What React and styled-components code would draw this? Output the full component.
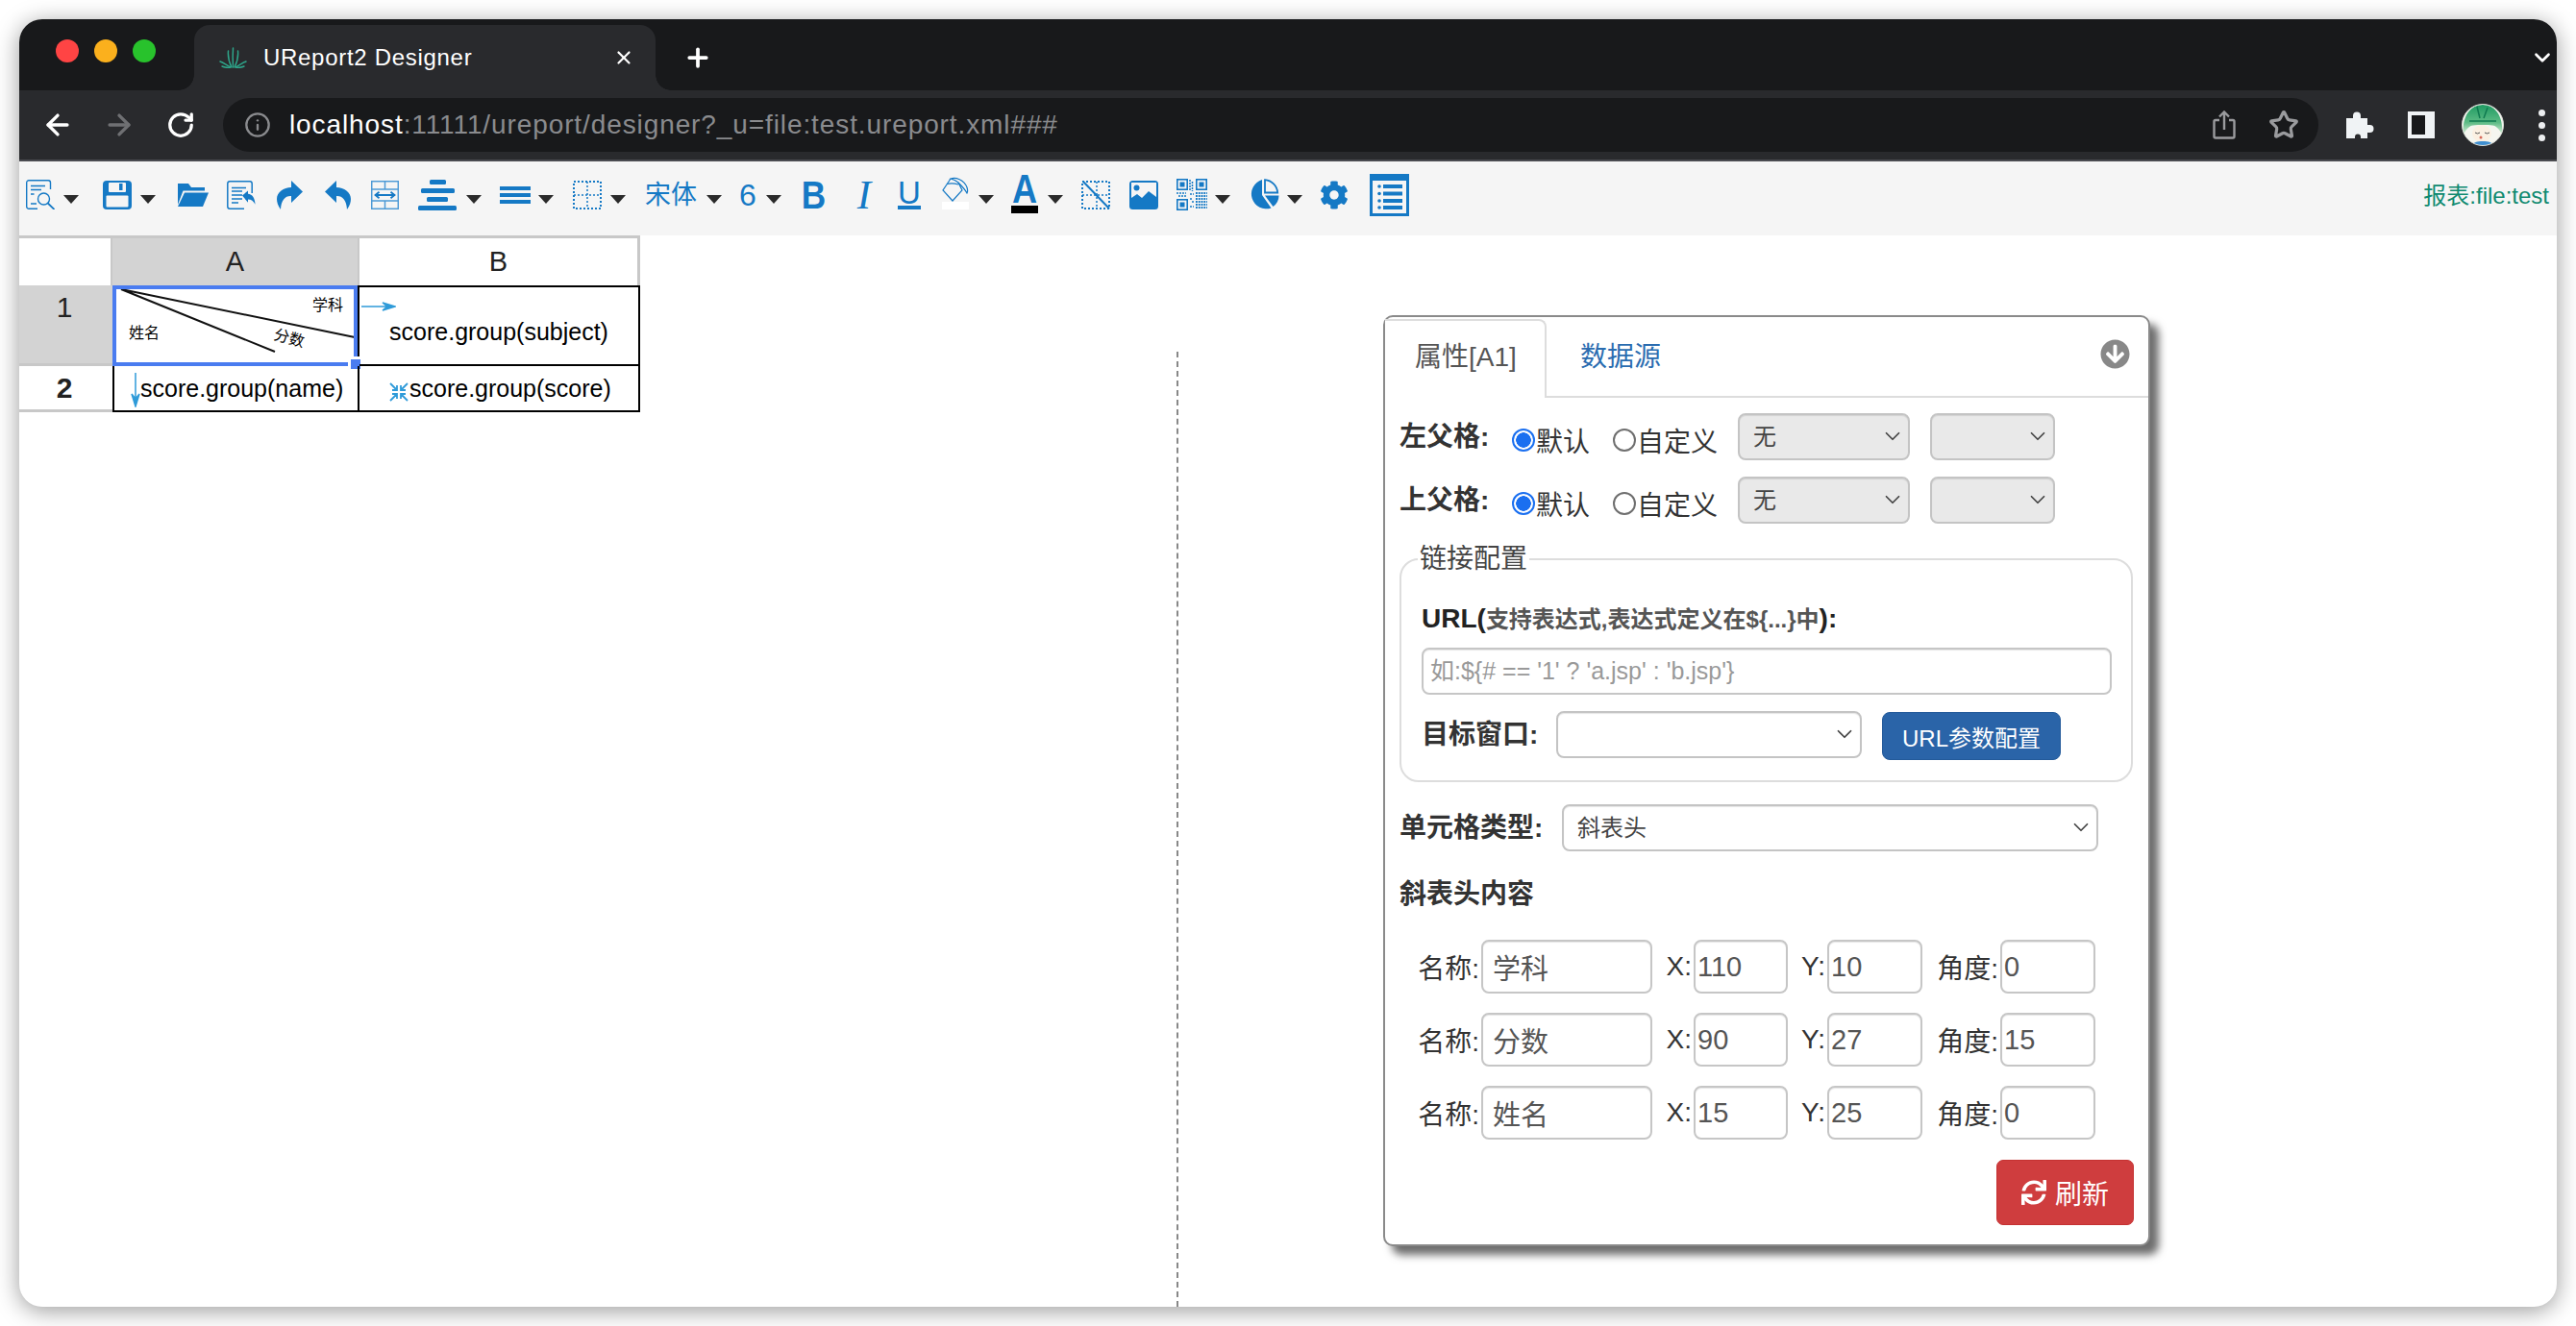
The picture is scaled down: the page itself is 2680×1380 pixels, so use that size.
import React from "react";
import styled, { createGlobalStyle } from "styled-components";
import { FaArrowCircleDown, FaCog, FaSync } from "react-icons/fa";
import { ArrowLeft, ArrowRight, ChevronDown, Info, Plus, RotateCw, Star, X } from "lucide-react";

const BLUE = "#1579c5";
const FONT = `"Liberation Sans", "Noto Sans CJK SC", sans-serif`;

const GlobalStyle = createGlobalStyle`
html, body {
  margin: 0;
  padding: 0;
  background: #fff;
  font-family: ${FONT};
  overflow: hidden;
}
`;

const Page = styled.div`
box-sizing: border-box;
width: 2680px;
height: 1380px;
padding: 20px;
`;

const Window = styled.div`
width: 2640px;
height: 1340px;
border-radius: 24px;
background: #fff;
box-shadow: 0 4px 24px rgba(0, 0, 0, 0.4);
display: flex;
flex-direction: column;
overflow: hidden;
`;

const TabStrip = styled.div`
height: 74px;
flex: none;
background: #18191b;
display: flex;
align-items: flex-end;
`;

const Lights = styled.div`
align-self: flex-start;
display: flex;
gap: 16px;
margin: 21px 0 0 38px;
`;

const Light = styled.span`
width: 24px;
height: 24px;
border-radius: 50%;
background: ${props => props.$color};
`;

const BrowserTab = styled.div`
position: relative;
box-sizing: border-box;
width: 480px;
height: 68px;
margin-left: 40px;
padding: 0 22px 0 26px;
background: #292a2d;
border-radius: 16px 16px 0 0;
display: flex;
align-items: center;
color: #fff;
font-size: 24px;
&::before, &::after {
  content: "";
  position: absolute;
  bottom: 0;
  width: 16px;
  height: 16px;
}
&::before {
  left: -16px;
  background: radial-gradient(circle at 0 0, transparent 15.5px, #292a2d 16px);
}
&::after {
  right: -16px;
  background: radial-gradient(circle at 100% 0, transparent 15.5px, #292a2d 16px);
}
`;

const TabTitle = styled.span`
margin-left: 17px;
flex: 1;
letter-spacing: 0.7px;
`;

const NewTab = styled.span`
height: 68px;
margin-left: 29px;
display: flex;
align-items: center;
color: #fff;
`;

const StripChevron = styled.span`
margin-left: auto;
margin-right: 2px;
height: 68px;
display: flex;
align-items: center;
color: #fff;
`;

const AddressRow = styled.div`
box-sizing: border-box;
height: 74px;
flex: none;
background: #292a2d;
border-bottom: 2px solid #4a4b50;
padding-left: 8px;
display: flex;
align-items: center;
`;

const NavButton = styled.span`
width: 64px;
display: flex;
justify-content: center;
color: ${props => props.$dim ? "#6f7073" : "#fff"};
`;

const UrlBox = styled.div`
box-sizing: border-box;
width: 2180px;
height: 56px;
margin-left: 12px;
padding: 0 20px 0 22px;
border-radius: 28px;
background: #18191b;
display: flex;
align-items: center;
color: #8a8b8e;
font-size: 28px;
`;

const UrlText = styled.span`
margin-left: 19px;
flex: 1;
white-space: nowrap;
letter-spacing: 0.9px;
b {
  font-weight: normal;
  color: #fff;
}
`;

const UrlAction = styled.span`
display: flex;
margin-left: ${props => props.$ml || 0}px;
color: #9a9b9e;
`;

const ExtArea = styled.div`
margin-left: 21px;
display: flex;
align-items: center;
gap: 20px;
`;

const ExtButton = styled.span`
width: 44px;
display: flex;
justify-content: center;
color: #f0f3f5;
`;

const Dots = styled.span`
margin-left: 16px;
display: flex;
flex-direction: column;
gap: 6px;
i {
  display: block;
  width: 7px;
  height: 7px;
  border-radius: 50%;
  background: #eceef0;
}
`;

const Toolbar = styled.div`
box-sizing: border-box;
height: 77px;
flex: none;
background: #f5f5f5;
padding: 0 8px 8px 7px;
display: flex;
align-items: center;
color: ${BLUE};
`;

const Tool = styled.span`
display: flex;
flex: none;
margin-left: ${props => props.$ml || 0}px;
`;

const ToolText = styled.span`
flex: none;
margin-left: ${props => props.$ml}px;
font-size: ${props => props.$size}px;
line-height: 34px;
`;

const Caret = styled.span`
flex: none;
width: 0;
height: 0;
margin-top: 9px;
margin-left: ${props => props.$ml}px;
border-left: 8px solid transparent;
border-right: 8px solid transparent;
border-top: 9px solid #2a2a2a;
`;

const BoldGlyph = styled.span`
flex: none;
margin-left: ${props => props.$ml}px;
font-size: 40px;
font-weight: bold;
line-height: 34px;
transform: scaleX(0.88);
`;

const ItalicGlyph = styled.span`
flex: none;
margin-left: ${props => props.$ml}px;
font-family: "Liberation Serif", serif;
font-style: italic;
font-size: 43px;
line-height: 34px;
`;

const UnderGlyph = styled.span`
flex: none;
width: 24px;
margin-left: ${props => props.$ml}px;
font-size: 33px;
line-height: 27px;
text-align: center;
border-bottom: 4px solid ${BLUE};
`;

const SwatchTool = styled.span`
flex: none;
width: 28px;
margin-left: ${props => props.$ml}px;
margin-top: -3px;
display: flex;
flex-direction: column;
align-items: center;
`;

const Swatch = styled.span`
width: 28px;
height: 8px;
background: ${props => props.$color};
`;

const ColorLetter = styled.span`
font-size: 42px;
font-weight: bold;
line-height: 34px;
height: 34px;
transform: scaleX(0.86);
`;

const ReportName = styled.span`
margin-left: auto;
margin-bottom: 3px;
color: #0f8a70;
font-size: 24px;
`;

const Workspace = styled.div`
flex: 1;
display: flex;
min-height: 0;
`;

const SheetPane = styled.div`
width: 1204px;
flex: none;
`;

const Sheet = styled.div`
display: grid;
grid-template-columns: 97px 257px 292px;
grid-template-rows: 52px 84px 48px;
width: 646px;
color: #000;
font-size: 25px;
`;

const HeadCell = styled.div`
box-sizing: border-box;
border-top: 3px solid #c8c8c8;
border-right: ${props => props.$last ? "3px" : "2px"} solid #c8c8c8;
background: ${props => props.$active ? "#d3d3d3" : "#fff"};
display: flex;
align-items: center;
justify-content: center;
font-size: 29px;
color: #222;
`;

const RowHead = styled.div`
box-sizing: border-box;
padding: ${props => props.$pad}px 3px 0 0;
border-bottom: 3px solid #c8c8c8;
background: ${props => props.$active ? "#d3d3d3" : "#fff"};
text-align: center;
font-size: 30px;
line-height: 40px;
font-weight: ${props => props.$bold ? "bold" : "normal"};
color: #222;
`;

const DataCell = styled.div`
position: relative;
box-sizing: border-box;
border-right: 2px solid #000;
border-bottom: 2px solid #000;
border-top: ${props => props.$first ? "2px solid #000" : "0"};
border-left: ${props => props.$lead ? "2px solid #000" : "0"};
display: flex;
align-items: center;
justify-content: ${props => props.$center ? "center" : "flex-start"};
padding-left: ${props => props.$pad || 0}px;
padding-top: ${props => props.$top || 0}px;
white-space: nowrap;
`;

const CellIcon = styled.svg`
position: absolute;
left: ${props => props.$x}px;
top: ${props => props.$y}px;
`;

const Selection = styled.span`
position: absolute;
inset: -2px 0 -2px -2px;
border: 4px solid #4a7cf0;
pointer-events: none;
`;

const SelectionHandle = styled.span`
position: absolute;
right: -10px;
bottom: -10px;
width: 10px;
height: 10px;
background: #4a7cf0;
border: 3px solid #fff;
`;

const DiagonalCanvas = styled.svg`
display: block;
`;

const Splitter = styled.div`
width: 0;
flex: none;
margin-top: 121px;
border-left: 2px dashed #888;
`;

const PanelPane = styled.div`
flex: 1;
padding: 83px 0 0 213px;
`;

const Panel = styled.div`
box-sizing: border-box;
width: 798px;
height: 969px;
border: 2px solid #8a8a8a;
border-radius: 10px;
background: #fff;
box-shadow: 9px 9px 9px #6e6e6e;
color: #333;
font-size: 28px;
`;

const PanelTabs = styled.div`
position: relative;
box-sizing: border-box;
height: 84px;
border-bottom: 2px solid #ddd;
display: flex;
align-items: flex-end;
`;

const PanelTab = styled.div`
box-sizing: border-box;
height: ${props => props.$active ? "82px" : "80px"};
width: ${props => props.$active ? "168px" : "auto"};
margin-bottom: ${props => props.$active ? "-2px" : "0"};
padding-left: ${props => props.$active ? "31px" : "35px"};
background: #fff;
border: ${props => props.$active ? "2px solid #ddd" : "0"};
border-bottom: 0;
border-left: 0;
border-radius: 0 8px 0 0;
line-height: ${props => props.$active ? "76px" : "79px"};
color: ${props => props.$active ? "#555" : "#2a6cb0"};
`;

const CollapseIcon = styled.span`
position: absolute;
right: 19px;
top: 23px;
display: flex;
color: #888;
`;

const PanelBody = styled.div`
padding: 16px 0 0 15px;
`;

const FormRow = styled.div`
height: 49px;
margin-top: ${props => props.$mt || 0}px;
display: flex;
align-items: center;
`;

const Strong = styled.span`
flex: none;
width: ${props => props.$w ? `${props.$w}px` : "auto"};
font-weight: bold;
line-height: 40px;
`;

const Radio = styled.input.attrs({ type: "radio" })`
appearance: none;
flex: none;
box-sizing: border-box;
width: 24px;
height: 24px;
margin: 6px 1px 0 ${props => props.$ml}px;
border-radius: 50%;
border: 2px solid ${props => props.defaultChecked ? "#1a6ff0" : "#6f6f6f"};
background: ${props => props.defaultChecked ? "radial-gradient(circle, #1a6ff0 0 7.5px, #fff 8px)" : "#fff"};
`;

const RadioText = styled.span`
flex: none;
margin-top: 12px;
line-height: 40px;
`;

const SelectWrap = styled.span`
position: relative;
flex: none;
display: block;
width: ${props => props.$w}px;
height: 49px;
margin-left: ${props => props.$ml || 0}px;
color: #444;
`;

const SelectField = styled.select`
appearance: none;
box-sizing: border-box;
width: 100%;
height: 100%;
padding: 0 30px 0 14px;
border: 2px solid #c4c4c4;
border-radius: 8px;
box-shadow: inset 0 1px 1px rgba(0, 0, 0, 0.1);
background: ${props => props.disabled ? "#e9e9e9" : "#fff"};
color: #444;
opacity: 1;
font-family: ${FONT};
font-size: 24px;
`;

const SelectArrow = styled.span`
position: absolute;
right: 5px;
top: 11px;
display: flex;
pointer-events: none;
`;

const LinkBox = styled.fieldset`
width: 763px;
box-sizing: border-box;
margin: 17px 0 0;
padding: 0 0 23px 21px;
border: 2px solid #ddd;
border-radius: 20px;
`;

const LinkLegend = styled.legend`
margin-left: -4px;
padding: 0 2px;
line-height: 40px;
color: #444;
`;

const UrlLabel = styled.div`
margin-top: 22px;
font-weight: bold;
line-height: 40px;
color: #222;
small {
  font-size: 24px;
  color: #555;
}
`;

const TextField = styled.input`
box-sizing: border-box;
display: block;
width: ${props => props.$w ? `${props.$w}px` : "100%"};
height: ${props => props.$h || 56}px;
margin: ${props => props.$mt || 0}px 0 0;
padding: 0 0 0 ${props => props.$pad}px;
border: 2px solid #c6c6c6;
border-radius: 8px;
box-shadow: inset 0 1px 1px rgba(0, 0, 0, 0.1);
background: #fff;
color: #555;
font-family: ${FONT};
font-size: ${props => props.$size || 29}px;
&::placeholder {
  color: #999;
}
`;

const PrimaryButton = styled.button`
flex: none;
width: 186px;
height: 50px;
margin: 3px 0 0 21px;
padding: 0;
border: 1px solid #245a9a;
border-radius: 8px;
background: #2a64a8;
color: #fff;
font-family: ${FONT};
font-size: 24px;
`;

const SectionTitle = styled.div`
margin-top: 25px;
font-weight: bold;
line-height: 40px;
color: #333;
`;

const OffsetGrid = styled.div`
margin: 27px 0 0 15px;
display: grid;
grid-template-columns: 70px 178px 43px 98px 41px 99px 81px 99px;
grid-auto-rows: 56px;
row-gap: 20px;
align-items: center;
`;

const OffsetLabel = styled.span`
text-align: right;
padding-right: ${props => props.$pr || 2}px;
color: #333;
`;

const RefreshButton = styled.button`
display: flex;
align-items: center;
justify-content: center;
gap: 9px;
width: 143px;
height: 68px;
margin: 21px 0 0 621px;
padding: 0;
border: 1px solid #c53232;
border-radius: 7px;
background: #cf3d3e;
color: #fff;
font-family: ${FONT};
font-size: 28px;
`;

const Favicon = () => (
  <svg width="29" height="22" viewBox="0 0 29 22" fill="none" stroke="#2ea58a" strokeWidth="1.5" strokeLinecap="round">
    <path d="M14.5 21C14 13 14 7 14.5 1" />
    <path d="M13 21C10 15 9 9 9.5 4" />
    <path d="M16 21C19 15 20 9 19.5 4" />
    <path d="M12 21C8 19 4 16 1 15" />
    <path d="M17 21C21 19 25 16 28 15" />
    <path d="M11 21.5C8 21.5 5 21 3 20" />
    <path d="M18 21.5C21 21.5 24 21 26 20" />
  </svg>
);

const ShareIcon = () => (
  <svg width="24" height="30" viewBox="0 0 24 30" fill="none" stroke="currentColor" strokeWidth="2.4">
    <path d="M7 10H3a1.5 1.5 0 0 0-1.5 1.5V27A1.5 1.5 0 0 0 3 28.5h18a1.5 1.5 0 0 0 1.5-1.5V11.500A1.5 1.5 0 0 0 21 10h-4" />
    <path d="M12 20V2M7 6.500L12 1.500L17 6.500" />
  </svg>
);

const PuzzleIcon = () => (
  <svg width="30" height="28" viewBox="0 0 30 28" fill="currentColor">
    <path d="M1 7h7V4.500a4 4 0 0 1 8 0V7h7v7h2.500a4 4 0 0 1 0 8H23v6h-7v-1.500a3 3 0 0 0-6 0V28H1z" />
  </svg>
);

const SidePanelIcon = () => (
  <svg width="28" height="28" viewBox="0 0 28 28">
    <rect width="28" height="28" fill="#f0f3f5" />
    <rect x="4" y="4" width="14" height="20" fill="#18191b" />
  </svg>
);

const Avatar = () => (
  <svg width="44" height="44" viewBox="0 0 44 44">
    <defs>
      <clipPath id="avatarClip"><circle cx="22" cy="22" r="21.500" /></clipPath>
      <linearGradient id="hairFill" x1="0" y1="0" x2="0" y2="1">
        <stop offset="0" stopColor="#1f9a62" />
        <stop offset="0.6" stopColor="#5dbb85" />
        <stop offset="1" stopColor="#dff2dd" />
      </linearGradient>
    </defs>
    <g clipPath="url(#avatarClip)">
      <rect width="44" height="44" fill="#f5f6f0" />
      <path d="M2 32C0 12 10 1 22 1s22 11 20 31c-3-6-6-9-10-9.500-5-.6-14-.6-20 0-4 .5-7 3.500-10 9.500z" fill="url(#hairFill)" />
      <ellipse cx="21" cy="31" rx="10" ry="9" fill="#fbf0e2" />
      <path d="M14 30q2.500 2 5 0M24 30q2.500 2 5 0" stroke="#555" strokeWidth="1" fill="none" />
      <circle cx="20" cy="35" r="1.500" fill="#d76a5a" />
      <path d="M10 44c2-4 6-5 12-5s10 1 12 5z" fill="#3f8fd0" />
      <path d="M16 3l3 12M27 4l-4 11M8 18h28" stroke="#0f7a50" strokeWidth="1.500" fill="none" />
    </g>
    <circle cx="22" cy="22" r="21.500" fill="none" stroke="#d9dcd6" />
  </svg>
);

const PreviewIcon = () => (
  <svg width="30" height="31" viewBox="0 0 30 31" fill="none" stroke={BLUE} strokeWidth="1.400">
    <path d="M25.500 10V3a2.300 2.300 0 0 0-2.300-2.300H3A2.300 2.300 0 0 0 .7 3v25A2.300 2.300 0 0 0 3 30.300h9" />
    <path d="M5 6.500h15M5 10.500h11M5 15h3.500M5 25h6" strokeWidth="1.600" />
    <circle cx="18.500" cy="20" r="6" />
    <path d="M22.800 24.500L29.500 31" strokeWidth="1.800" />
  </svg>
);

const SaveIcon = () => (
  <svg width="30" height="30" viewBox="0 0 30 30">
    <rect width="30" height="30" rx="4" fill={BLUE} />
    <rect x="6" y="2" width="18" height="10" rx="1" fill="#f5f5f5" />
    <rect x="17" y="3" width="3.500" height="7" fill={BLUE} />
    <rect x="3.500" y="15.500" width="23" height="12" rx="1" fill="#f5f5f5" />
  </svg>
);

const FolderIcon = () => (
  <svg width="32" height="26" viewBox="0 0 32 26" fill={BLUE}>
    <path d="M0 1h11l3 4h14v3.500H5.500L0 23z" />
    <path d="M7 10.500h25L26 25H0z" />
  </svg>
);

const ImportIcon = () => (
  <svg width="30" height="30" viewBox="0 0 30 30" fill="none" stroke={BLUE} strokeWidth="1.500">
    <path d="M18 29.200H3A2.300 2.300 0 0 1 .8 27V3A2.300 2.300 0 0 1 3 .8h21A2.300 2.300 0 0 1 26.200 3v10" />
    <path d="M5 7.500h15M5 11h11M5 15h11M5 19h11M5 23h7" strokeWidth="1.600" />
    <path d="M16 15.500l6-5v3.300c4.500.5 7 4 7.500 11-1.800-3.500-4-5.200-7.500-5.200v3.200z" fill={BLUE} stroke="none" />
  </svg>
);

const TurnPath = styled.svg`
transform: ${props => props.$flip ? "scaleX(-1)" : "none"};
`;

const TurnArrow = ({ flip }) => (
  <TurnPath $flip={flip} width="27" height="30" viewBox="0 0 27 30" fill={BLUE}>
    <path d="M15 0L27 11.500L15 23V16C9 15.500 4.500 20 4 30C1 26 0 22 0 19C0 12 7 7 15 7Z" />
  </TurnPath>
);

const MergeIcon = () => (
  <svg width="29" height="30" viewBox="0 0 29 30" fill="none" stroke="#4d9ad6" strokeWidth="1.500">
    <rect x=".7" y=".7" width="27.600" height="28.600" />
    <path d="M.7 9h27.600M.7 21h27.600M14.500 1v8M14.500 21v8" />
    <path d="M5 15h19M8.500 11.800L4.500 15l4 3.200M20.500 11.800l4 3.200-4 3.200" stroke={BLUE} strokeWidth="1.800" />
  </svg>
);

const AlignIcon = () => (
  <svg width="40" height="32" viewBox="0 0 40 32" fill={BLUE}>
    <rect x="12" y="0" width="17" height="5" rx="1.500" />
    <rect x="3" y="9" width="35" height="5" rx="1.500" />
    <rect x="9" y="18" width="22" height="5" rx="1.500" />
    <rect x="0" y="27" width="40" height="5" rx="1.500" />
  </svg>
);

const LinesIcon = () => (
  <svg width="32" height="18" viewBox="0 0 32 18" fill={BLUE}>
    <rect width="32" height="4" />
    <rect y="7" width="32" height="4" />
    <rect y="14" width="32" height="4" />
  </svg>
);

const BorderIcon = () => (
  <svg width="30" height="30" viewBox="0 0 30 30" fill="none" stroke={BLUE} strokeWidth="2" strokeDasharray="2 2">
    <rect x="1" y="1" width="28" height="28" />
    <path d="M15 1v28M1 15h28" strokeWidth="1.500" />
  </svg>
);

const PaintIcon = () => (
  <svg width="28" height="26" viewBox="0 0 28 26" fill="none" stroke={BLUE} strokeWidth="1.200">
    <path d="M9 2L1 14l10 11 10-11-4-8" />
    <path d="M9 2c5-2 14 1 17 9 .8 2.500.8 4.500 0 6-1.500-3-3-5-9-11-3-2.500-6-3.500-8-4z" />
    <path d="M5 7.500c4-1 8-.8 12 .5" />
  </svg>
);

const DiagonalIcon = () => (
  <svg width="30" height="30" viewBox="0 0 30 30" fill="none" stroke={BLUE}>
    <rect x="1" y="1" width="28" height="28" strokeWidth="2" strokeDasharray="2 2" />
    <path d="M16 1v28M1 15h28" strokeWidth="1.500" strokeDasharray="2 2" />
    <path d="M2 1L29 29" strokeWidth="2" />
  </svg>
);

const ImageIcon = () => (
  <svg width="30" height="30" viewBox="0 0 30 30">
    <rect width="30" height="30" rx="3.500" fill={BLUE} />
    <rect x="2" y="2" width="26" height="23" fill="#f5f5f5" />
    <circle cx="7.500" cy="7.500" r="3" fill={BLUE} />
    <path d="M2 18l6-4 5 4 7-7 8 6v11H2z" fill={BLUE} />
  </svg>
);

const QrFinder = ({ x, y }) => (
  <g>
    <rect x={x + 0.8} y={y + 0.8} width="10.400" height="10.400" fill="none" stroke={BLUE} strokeWidth="1.600" />
    <rect x={x + 3.500} y={y + 3.500} width="5" height="5" fill={BLUE} />
  </g>
);

const QrIcon = () => (
  <svg width="32" height="33" viewBox="0 0 32 33">
    <QrFinder x={0} y={0} />
    <QrFinder x={20} y={0} />
    <QrFinder x={0} y={21} />
    <path d="M14 1v11M16.500 3v10M0 15h10M2 18h8M14 16h4M14 21h2M14 29h4M16 24h2" stroke={BLUE} strokeWidth="1.500" strokeDasharray="2 1" fill="none" />
    <path d="M20 15h12M20 18h12M20 21h12M20 24h12M20 27h12M20 30h12" stroke={BLUE} strokeWidth="1.800" strokeDasharray="1.800 1" fill="none" />
  </svg>
);

const PieIcon = () => (
  <svg width="33" height="33" viewBox="0 0 33 33">
    <path d="M15 1A15.500 15.500 0 1 0 24.500 30.500L15 17z" fill={BLUE} />
    <path d="M18 1.200A14.500 14.500 0 0 1 31.200 14.500H18z" fill="none" stroke={BLUE} strokeWidth="1.800" />
    <path d="M18 17.500h14.500A14.500 14.500 0 0 1 26.500 29z" fill={BLUE} />
  </svg>
);

const ListIcon = () => (
  <svg width="41" height="44" viewBox="0 0 41 44">
    <rect width="41" height="44" fill={BLUE} />
    <rect x="3" y="7" width="35" height="34" fill="#f5f5f5" />
    <g fill={BLUE}>
      <circle cx="10" cy="13" r="1.800" /><rect x="14" y="11" width="20" height="4" />
      <circle cx="10" cy="20.500" r="1.800" /><rect x="14" y="18.500" width="20" height="4" />
      <circle cx="10" cy="28" r="1.800" /><rect x="14" y="26" width="20" height="4" />
      <circle cx="10" cy="35" r="1.800" /><rect x="14" y="33" width="20" height="4" />
    </g>
  </svg>
);

const DiagonalHeader = () => (
  <DiagonalCanvas width="253" height="80" viewBox="0 0 253 80">
    <path d="M7 2L250 52M7 2L167 67" stroke="#111" strokeWidth="2" fill="none" />
    <text x="206" y="24" fontSize="16" fontFamily={FONT} fill="#000">学科</text>
    <text x="15" y="53" fontSize="16" fontFamily={FONT} fill="#000">姓名</text>
    <text x="165" y="54" fontSize="16" fontFamily={FONT} fill="#000" transform="rotate(15 165 54)">分数</text>
  </DiagonalCanvas>
);

const SelectBox = ({ width, ml, disabled, label }) => (
  <SelectWrap $w={width} $ml={ml}>
    <SelectField disabled={disabled} defaultValue={label || ""}>
      <option value={label || ""}>{label || ""}</option>
    </SelectField>
    <SelectArrow><ChevronDown size={26} strokeWidth={1.6} /></SelectArrow>
  </SelectWrap>
);

const ParentRow = ({ label, mt }) => (
  <FormRow $mt={mt}>
    <Strong $w={109}>{label}</Strong>
    <Radio $ml={8} name={label} defaultChecked />
    <RadioText>默认</RadioText>
    <Radio $ml={24} name={label} />
    <RadioText>自定义</RadioText>
    <SelectBox width={179} ml={21} disabled label="无" />
    <SelectBox width={130} ml={21} disabled />
  </FormRow>
);

const offsets = [
  { name: "学科", x: "110", y: "10", angle: "0" },
  { name: "分数", x: "90", y: "27", angle: "15" },
  { name: "姓名", x: "15", y: "25", angle: "0" },
];

const App = () => (
  <Page>
    <GlobalStyle />
    <Window>
      <TabStrip>
        <Lights>
          <Light $color="#ff4444" />
          <Light $color="#fbb01d" />
          <Light $color="#28c22c" />
        </Lights>
        <BrowserTab>
          <Favicon />
          <TabTitle>UReport2 Designer</TabTitle>
          <X size={22} strokeWidth={2.4} />
        </BrowserTab>
        <NewTab><Plus size={30} strokeWidth={3} /></NewTab>
        <StripChevron><ChevronDown size={26} strokeWidth={2.5} /></StripChevron>
      </TabStrip>

      <AddressRow>
        <NavButton><ArrowLeft size={34} strokeWidth={2.4} /></NavButton>
        <NavButton $dim><ArrowRight size={34} strokeWidth={2.4} /></NavButton>
        <NavButton><RotateCw size={30} strokeWidth={2.6} /></NavButton>
        <UrlBox>
          <Info size={28} strokeWidth={2} />
          <UrlText><b>localhost</b>:11111/ureport/designer?_u=file:test.ureport.xml###</UrlText>
          <UrlAction><ShareIcon /></UrlAction>
          <UrlAction $ml={34}><Star size={32} strokeWidth={2.4} /></UrlAction>
        </UrlBox>
        <ExtArea>
          <ExtButton><PuzzleIcon /></ExtButton>
          <ExtButton><SidePanelIcon /></ExtButton>
          <ExtButton><Avatar /></ExtButton>
          <Dots><i /><i /><i /></Dots>
        </ExtArea>
      </AddressRow>

      <Toolbar>
        <Tool><PreviewIcon /></Tool>
        <Caret $ml={9} />
        <Tool $ml={25}><SaveIcon /></Tool>
        <Caret $ml={9} />
        <Tool $ml={23}><FolderIcon /></Tool>
        <Tool $ml={19}><ImportIcon /></Tool>
        <Tool $ml={22}><TurnArrow /></Tool>
        <Tool $ml={23}><TurnArrow flip /></Tool>
        <Tool $ml={21}><MergeIcon /></Tool>
        <Tool $ml={20}><AlignIcon /></Tool>
        <Caret $ml={10} />
        <Tool $ml={19}><LinesIcon /></Tool>
        <Caret $ml={8} />
        <Tool $ml={20}><BorderIcon /></Tool>
        <Caret $ml={9} />
        <ToolText $ml={20} $size={27}>宋体</ToolText>
        <Caret $ml={10} />
        <ToolText $ml={18} $size={32}>6</ToolText>
        <Caret $ml={10} />
        <BoldGlyph $ml={19}>B</BoldGlyph>
        <ItalicGlyph $ml={31}>I</ItalicGlyph>
        <UnderGlyph $ml={28}>U</UnderGlyph>
        <SwatchTool $ml={22}>
          <PaintIcon />
          <Swatch $color="#fff" />
        </SwatchTool>
        <Caret $ml={10} />
        <SwatchTool $ml={18}>
          <ColorLetter>A</ColorLetter>
          <Swatch $color="#000" />
        </SwatchTool>
        <Caret $ml={10} />
        <Tool $ml={19}><DiagonalIcon /></Tool>
        <Tool $ml={20}><ImageIcon /></Tool>
        <Tool $ml={19}><QrIcon /></Tool>
        <Caret $ml={8} />
        <Tool $ml={18}><PieIcon /></Tool>
        <Caret $ml={8} />
        <Tool $ml={18}><FaCog size={30} /></Tool>
        <Tool $ml={22}><ListIcon /></Tool>
        <ReportName>报表:file:test</ReportName>
      </Toolbar>

      <Workspace>
        <SheetPane>
          <Sheet>
            <HeadCell />
            <HeadCell $active>A</HeadCell>
            <HeadCell $last>B</HeadCell>

            <RowHead $active $pad={3}>1</RowHead>
            <DataCell $first $lead>
              <DiagonalHeader />
              <Selection><SelectionHandle /></Selection>
            </DataCell>
            <DataCell $first $center $top={12}>
              <CellIcon $x={2} $y={14} width="36" height="12" viewBox="0 0 36 12" fill="none" stroke="#2f9bd9" strokeWidth="1.500">
                <path d="M0 6h34M22 2l13 4-13 4 5-4z" fill="#2f9bd9" />
              </CellIcon>
              score.group(subject)
            </DataCell>

            <RowHead $bold $pad={3}>2</RowHead>
            <DataCell $lead $pad={27}>
              <CellIcon $x={16} $y={7} width="12" height="36" viewBox="0 0 12 36" fill="none" stroke="#2f9bd9" strokeWidth="1.500">
                <path d="M6 0v34M2 22l4 13 4-13-4 5z" fill="#2f9bd9" />
              </CellIcon>
              score.group(name)
            </DataCell>
            <DataCell $pad={52}>
              <CellIcon $x={31} $y={17} width="20" height="20" viewBox="0 0 20 20" fill="none" stroke="#2f9bd9" strokeWidth="1.800">
                <path d="M1 1l7 7M8 3v5H3M19 1l-7 7M12 3v5h5M1 19l7-7M8 17v-5H3M19 19l-7-7M12 17v-5h5" />
              </CellIcon>
              score.group(score)
            </DataCell>
          </Sheet>
        </SheetPane>

        <Splitter />

        <PanelPane>
          <Panel>
            <PanelTabs>
              <PanelTab $active>属性[A1]</PanelTab>
              <PanelTab>数据源</PanelTab>
              <CollapseIcon><FaArrowCircleDown size={31} /></CollapseIcon>
            </PanelTabs>
            <PanelBody>
              <ParentRow label="左父格:" />
              <ParentRow label="上父格:" mt={17} />

              <LinkBox>
                <LinkLegend>链接配置</LinkLegend>
                <UrlLabel>URL(<small>支持表达式,表达式定义在${"{...}"}中</small>):</UrlLabel>
                <TextField $w={718} $h={49} $mt={9} $pad={7} $size={25} placeholder="如:${# == '1' ? 'a.jsp' : 'b.jsp'}" />
                <FormRow $mt={17}>
                  <Strong $w={140}>目标窗口:</Strong>
                  <SelectBox width={318} />
                  <PrimaryButton>URL参数配置</PrimaryButton>
                </FormRow>
              </LinkBox>

              <FormRow $mt={23}>
                <Strong $w={169}>单元格类型:</Strong>
                <SelectBox width={558} label="斜表头" />
              </FormRow>

              <SectionTitle>斜表头内容</SectionTitle>

              <OffsetGrid>
                {offsets.map(row => (
                  <React.Fragment key={row.name}>
                    <OffsetLabel>名称:</OffsetLabel>
                    <TextField $pad={10} defaultValue={row.name} />
                    <OffsetLabel $pr={0}>X:</OffsetLabel>
                    <TextField $pad={2} defaultValue={row.x} />
                    <OffsetLabel $pr={0}>Y:</OffsetLabel>
                    <TextField $pad={2} defaultValue={row.y} />
                    <OffsetLabel $pr={0}>角度:</OffsetLabel>
                    <TextField $pad={2} defaultValue={row.angle} />
                  </React.Fragment>
                ))}
              </OffsetGrid>

              <RefreshButton><FaSync size={26} />刷新</RefreshButton>
            </PanelBody>
          </Panel>
        </PanelPane>
      </Workspace>
    </Window>
  </Page>
);

export default App;
